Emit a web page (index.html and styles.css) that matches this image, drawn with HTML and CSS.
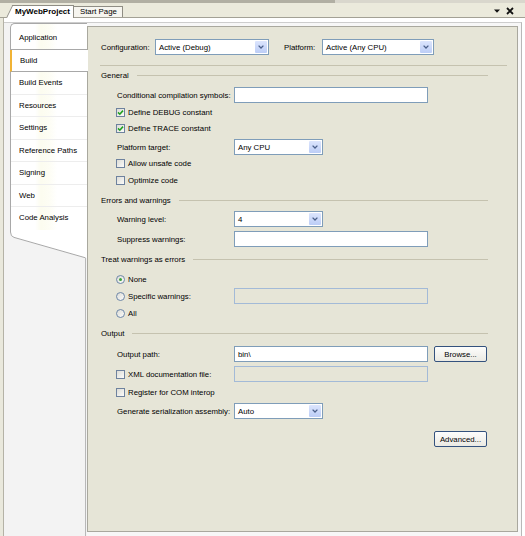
FILE: index.html
```html
<!DOCTYPE html>
<html>
<head>
<meta charset="utf-8">
<title>MyWebProject</title>
<link rel="stylesheet" href="styles.css">
</head>
<body>
<div class="topstrip"></div>
<div class="tabbar">
  <div class="doctab active">MyWebProject</div>
  <div class="doctab">Start Page</div>
  <div class="winctl">
    <svg width="6" height="4" viewBox="0 0 6 4"><path d="M0 0.5H6L3 3.8Z" fill="#111"/></svg>
    <svg width="8" height="8" viewBox="0 0 8 8"><path d="M1 1L7 7M7 1L1 7" stroke="#111" stroke-width="1.8"/></svg>
  </div>
</div>
<div class="doc">
  <div class="gutter"></div>
  <div class="frame">
    <div class="side">
      <ul class="nav">
        <li>Application</li>
        <li class="sel">Build</li>
        <li>Build Events</li>
        <li>Resources</li>
        <li>Settings</li>
        <li>Reference Paths</li>
        <li>Signing</li>
        <li>Web</li>
        <li>Code Analysis</li>
      </ul>
      <svg class="navtail" width="77" height="28" viewBox="0 0 77 28">
        <path d="M0 0V2Q0 6.8 4 7.8L75.5 28H77V0Z" fill="#fff"/>
        <path d="M0.5 0V2Q0.5 6.5 4 7.4L75.5 27.8" fill="none" stroke="#a8a8a8"/>
      </svg>
      <div class="navrest"></div>
    </div>

    <div class="panel">
      <div class="cfg">
        <span class="cfg-label">Configuration:</span>
        <div class="select w114"><span class="txt">Active (Debug)</span><span class="dd"><svg width="6" height="4" viewBox="0 0 6 4"><path d="M0.6 0.6L3 3L5.4 0.6" fill="none" stroke="#4a5f8a" stroke-width="1.3"/></svg></span></div>
        <span class="cfg-label2">Platform:</span>
        <div class="select w112"><span class="txt">Active (Any CPU)</span><span class="dd"><svg width="6" height="4" viewBox="0 0 6 4"><path d="M0.6 0.6L3 3L5.4 0.6" fill="none" stroke="#4a5f8a" stroke-width="1.3"/></svg></span></div>
      </div>
      <div class="rule"></div>

      <div class="sect">General</div>
      <div class="row mt3"><span class="lbl">Conditional compilation symbols:</span><div class="input"></div></div>
      <div class="row mt1"><span class="cb checked"><svg width="7" height="7" viewBox="0 0 7 7"><path d="M1 3.4L2.8 5.2L6 1.6" fill="none" stroke="#21a121" stroke-width="1.6"/></svg></span>Define DEBUG constant</div>
      <div class="row"><span class="cb checked"><svg width="7" height="7" viewBox="0 0 7 7"><path d="M1 3.4L2.8 5.2L6 1.6" fill="none" stroke="#21a121" stroke-width="1.6"/></svg></span>Define TRACE constant</div>
      <div class="row mt3"><span class="lbl">Platform target:</span><div class="select"><span class="txt">Any CPU</span><span class="dd"><svg width="6" height="4" viewBox="0 0 6 4"><path d="M0.6 0.6L3 3L5.4 0.6" fill="none" stroke="#4a5f8a" stroke-width="1.3"/></svg></span></div></div>
      <div class="row"><span class="cb"></span>Allow unsafe code</div>
      <div class="row mt1"><span class="cb"></span>Optimize code</div>

      <div class="sect mt3">Errors and warnings</div>
      <div class="row mt2"><span class="lbl">Warning level:</span><div class="select"><span class="txt">4</span><span class="dd"><svg width="6" height="4" viewBox="0 0 6 4"><path d="M0.6 0.6L3 3L5.4 0.6" fill="none" stroke="#4a5f8a" stroke-width="1.3"/></svg></span></div></div>
      <div class="row mt4"><span class="lbl">Suppress warnings:</span><div class="input"></div></div>

      <div class="sect mt3">Treat warnings as errors</div>
      <div class="row mt3"><span class="rb on"></span>None</div>
      <div class="row mt1"><span class="lbl"><span class="rb"></span>Specific warnings:</span><div class="input dis"></div></div>
      <div class="row mt1"><span class="rb"></span>All</div>

      <div class="sect mt3">Output</div>
      <div class="row mt4"><span class="lbl">Output path:</span><div class="input">bin\</div><div class="btn">Browse...</div></div>
      <div class="row mt4"><span class="lbl"><span class="cb"></span>XML documentation file:</span><div class="input dis"></div></div>
      <div class="row mt2"><span class="cb"></span>Register for COM interop</div>
      <div class="row mt3"><span class="lbl">Generate serialization assembly:</span><div class="select"><span class="txt">Auto</span><span class="dd"><svg width="6" height="4" viewBox="0 0 6 4"><path d="M0.6 0.6L3 3L5.4 0.6" fill="none" stroke="#4a5f8a" stroke-width="1.3"/></svg></span></div></div>
      <div class="btnrow"><div class="btn">Advanced...</div></div>
    </div>
  </div>
</div>
</body>
</html>
```
FILE: styles.css
```css
* { box-sizing: border-box; margin: 0; padding: 0; }
html, body { width: 525px; height: 536px; overflow: hidden; }
body {
  background: #fff;
  font-family: "Liberation Sans", Arial, sans-serif;
  font-size: 7.8px;
  color: #000;
}

.topstrip {
  height: 3px;
  background: linear-gradient(to right, #b1afa3 0, #b1afa3 335px, #d9d7cd 335px);
}

.tabbar {
  height: 14px;
  background: #ebeadc;
  display: flex;
  align-items: flex-end;
  padding-left: 13px;
}
.doctab {
  height: 11px;
  line-height: 10px;
  padding: 0 5px 0 6px;
  border: 1px solid #8f8d84;
  border-bottom: 0;
  background: #f6f5ef;
  white-space: nowrap;
}
.doctab.active {
  height: 13px;
  line-height: 12px;
  margin-bottom: -1px;
  padding: 0 3px 0 2px;
  border-left: 0;
  background: #fff;
  font-weight: bold;
  font-size: 8px;
  position: relative;
  z-index: 1;
  margin-right: -1px;
}
.doctab.active::before {
  content: "";
  position: absolute;
  left: -7px;
  top: -1px;
  bottom: 0;
  width: 9px;
  background: #fff;
  border-left: 1px solid #8f8d84;
  border-top: 1px solid #8f8d84;
  transform: skewX(-26deg);
  transform-origin: bottom left;
  z-index: -1;
}
.winctl {
  margin-left: auto;
  align-self: center;
  display: flex;
  align-items: center;
  gap: 6px;
  padding-right: 11px;
  padding-top: 1px;
}
.winctl svg { display: block; }

.doc {
  display: flex;
  height: 519px;
  border-top: 1px solid #a3a195;
  background: #fff;
}
.gutter {
  width: 4px;
  background: #e9e8dc;
  border-right: 1px solid #b4b2a6;
}
.frame {
  display: flex;
  width: 518px;
  margin-top: 4px;
  border-top: 1px solid #cdcdcd;
  border-right: 1px solid #b8b8b8;
  background: #f7f7f7;
}

.side {
  width: 83px;
  display: flex;
  flex-direction: column;
  background: #f3f3f3;
}
.nav {
  list-style: none;
  margin-left: 6px;
  width: 77px;
  padding-top: 3px;
  border-left: 1px solid #a8a8a8;
  border-top: 1px solid #a8a8a8;
  border-top-left-radius: 5px;
  background: linear-gradient(to right, #fff 0, #fff 24px, #fcfcef 30px, #fdfdf4 38px, #fff 46px, #fff 100%);
}
.nav li {
  height: 22.5px;
  display: flex;
  align-items: center;
  padding-left: 8px;
  border-bottom: 1px solid #ededed;
  white-space: nowrap;
}
.nav li:last-child { border-bottom-color: transparent; }
.nav li:has(+ .sel) { border-bottom-color: #a8a8a8; }
.nav li.sel {
  background: #fff;
  margin-left: -1px;
  margin-right: -1px;
  border-left: 2px solid #f1b335;
  border-bottom-color: #a8a8a8;
  position: relative;
  z-index: 1;
}
.navtail { display: block; margin-left: 6px; }
.navrest {
  flex: 1;
  margin-right: 1px;
  border-right: 1px solid #b8b8b8;
}

.panel {
  width: 431px;
  height: 506px;
  margin-top: 3px;
  border: 1px solid #a9a89e;
  background: #e6e5d7;
  padding: 12px 0 0 13px;
}

.cfg {
  display: flex;
  align-items: center;
  height: 16px;
}
.cfg-label { width: 54px; white-space: nowrap; }
.cfg-label2 { width: 38px; margin-left: 15px; white-space: nowrap; }

.rule {
  margin: 10px 10px 0 -1px;
  border-top: 1px solid #c5c2af;
}

.sect {
  display: flex;
  align-items: center;
  height: 18px;
  margin-right: 29px;
  white-space: nowrap;
}
.sect::after {
  content: "";
  flex: 1;
  margin-left: 8px;
  border-top: 1px solid #c5c2af;
}

.row {
  display: flex;
  align-items: center;
  height: 16px;
  padding-left: 16px;
  white-space: nowrap;
}
.lbl {
  width: 117px;
  display: flex;
  align-items: center;
}
.mt1 { margin-top: 1px; }
.mt2 { margin-top: 2px; }
.mt3 { margin-top: 3px; }
.mt4 { margin-top: 4px; }

.input {
  width: 194px;
  height: 16px;
  border: 1px solid #7f9db9;
  background: #fff;
  padding-left: 3px;
  display: flex;
  align-items: center;
}
.input.dis {
  background: #e6e5d7;
  border-color: #a3bad7;
}

.select {
  width: 89px;
  height: 16px;
  border: 1px solid #7f9db9;
  background: #fff;
  padding-left: 3px;
  display: flex;
  align-items: center;
}
.select.w114 { width: 114px; }
.select.w112 { width: 112px; }
.select .txt { flex: 1; }
.select .dd {
  width: 12px;
  height: 12px;
  margin-right: 1px;
  border-radius: 1px;
  background: linear-gradient(#dce5fd, #bccdf6);
  display: flex;
  align-items: center;
  justify-content: center;
}
.select .dd svg { display: block; }

.cb {
  width: 9px;
  height: 9px;
  margin-left: -1px;
  margin-right: 3px;
  border: 1px solid #6e829e;
  background: linear-gradient(135deg, #dcdcd6, #fbfbfa);
  display: flex;
  align-items: center;
  justify-content: center;
  flex: none;
}
.cb svg { display: block; }

.rb {
  width: 9px;
  height: 9px;
  margin-left: -1px;
  margin-right: 3px;
  border: 1px solid #6e87a8;
  border-radius: 50%;
  background: linear-gradient(135deg, #dcdcd6, #fbfbfa);
  display: flex;
  align-items: center;
  justify-content: center;
  flex: none;
}
.rb.on::after {
  content: "";
  width: 3px;
  height: 3px;
  border-radius: 50%;
  background: #3aa43a;
}

.btn {
  width: 53px;
  height: 16px;
  margin-left: 6px;
  border: 1px solid #34527e;
  border-radius: 2px;
  background: linear-gradient(#fdfdfc, #ebeae3);
  display: flex;
  align-items: center;
  justify-content: center;
}
.btnrow {
  display: flex;
  margin-top: 12px;
  padding-left: 327px;
}
```
